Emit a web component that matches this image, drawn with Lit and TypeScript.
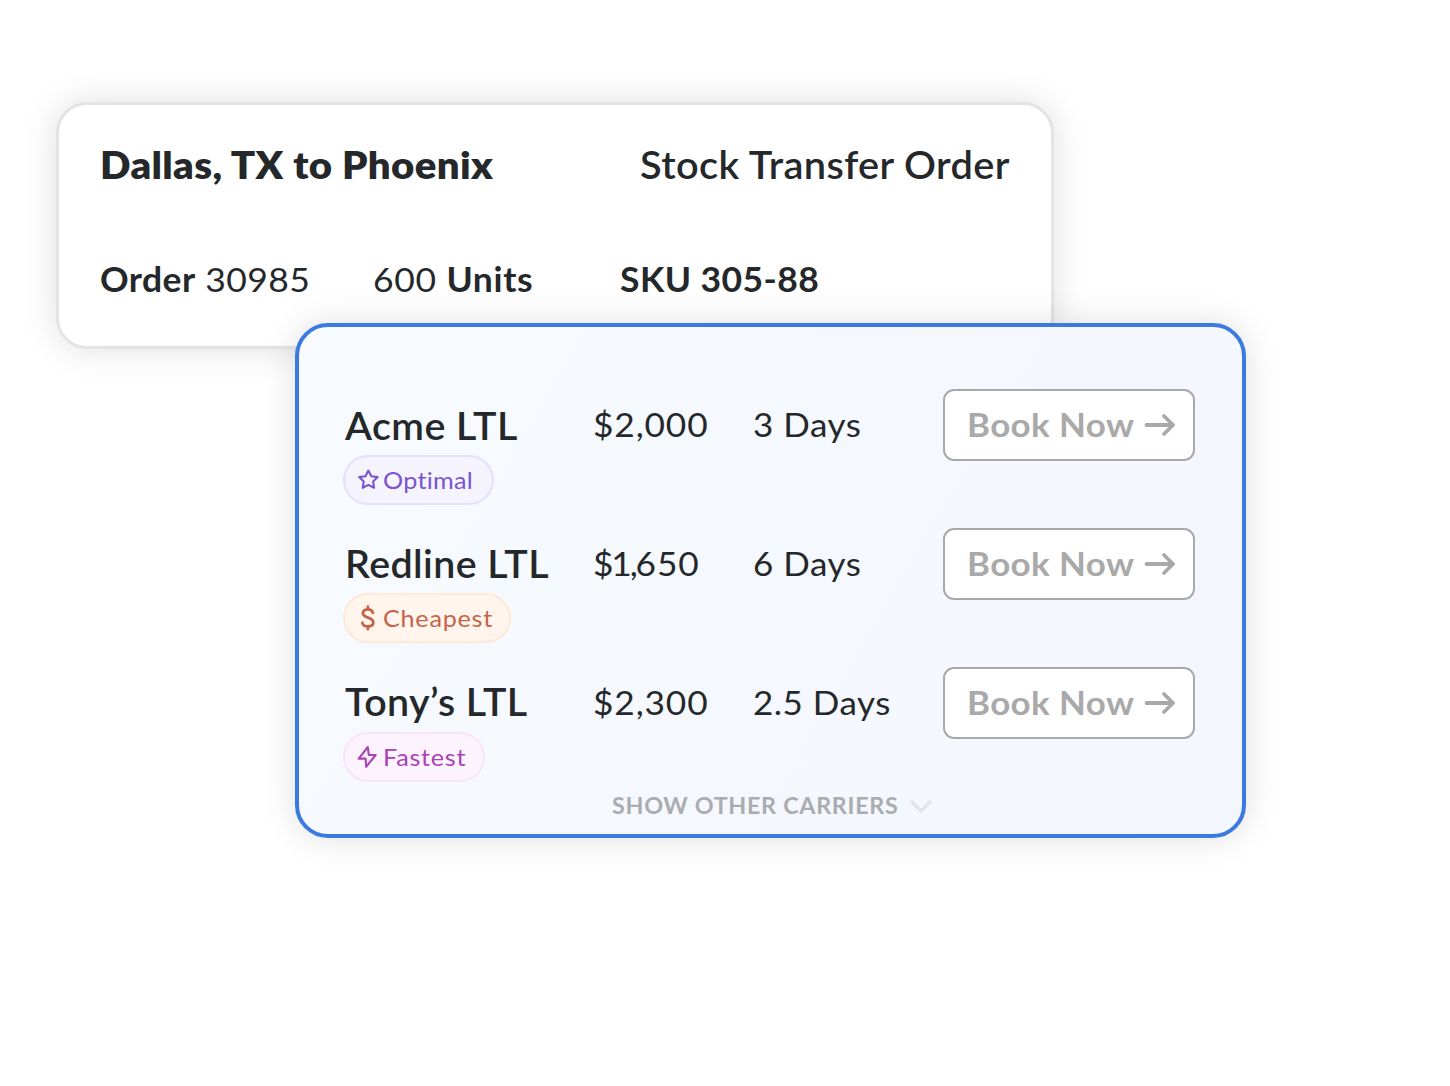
import { LitElement, html, css, svg } from "lit";
import type { TemplateResult } from "lit";
import { customElement, property } from "lit/decorators.js";

type Kind = "optimal" | "cheapest" | "fastest";

interface Quote {
  name: string;
  price: TemplateResult;
  time: string;
  kind: Kind;
  label: string;
}

const icons: Record<Kind, TemplateResult> = {
  optimal: svg`<path stroke-width="2.1" d="M11.4 4.6L14.3 10.2L20.6 11.1L16.1 15.6L17.1 21.8L11.4 18.9L5.7 21.8L6.7 15.6L2.2 11.1L8.5 10.2Z"/>`,
  cheapest: svg`<path stroke-width="2.8" d="M15.9 8.8C15.1 6.2 13.2 5.4 10.9 5.4C7.9 5.4 5.9 6.9 5.9 9.2C5.9 14.6 16.3 12.6 16.3 18.3C16.3 20.9 14 22.4 10.9 22.4C8.1 22.4 6 21.3 5.3 18.8M10.9 2.6V5M10.9 22.8V25.2"/>`,
  fastest: svg`<path stroke-width="2.1" d="M10.8 4L1.8 15.6H8.6L9.2 23.8L18.7 12H11.8Z"/>`,
};

const quotes: Quote[] = [
  { name: "Acme LTL", price: html`$2,000`, time: "3 Days", kind: "optimal", label: "Optimal" },
  { name: "Redline LTL", price: html`<span class="tight">$1,</span>650`, time: "6 Days", kind: "cheapest", label: "Cheapest" },
  { name: "Tony’s LTL", price: html`$2,300`, time: "2.5 Days", kind: "fastest", label: "Fastest" },
];

@customElement("carrier-tag")
export class CarrierTag extends LitElement {
  @property() kind: Kind = "optimal";
  @property() label = "";

  static styles = css`
    :host { display: block; }
    .tag {
      box-sizing: border-box;
      display: flex;
      align-items: center;
      height: 50px;
      padding: 0 0 1px 12px;
      border: 2px solid;
      border-radius: 25px;
      font-size: 24px;
      letter-spacing: 0.7px;
      font-variant-ligatures: none;
    }
    .label { transform: scaleX(1.05); transform-origin: left; }
    .icon { display: block; flex: none; width: 22px; height: 28px; margin-right: 4px; fill: none; stroke: currentColor; stroke-linejoin: round; stroke-linecap: round; }
    .optimal { width: 151px; color: #7a55cf; background: #f5f3fe; border-color: #e6e0fb; letter-spacing: 0.25px; }
    .cheapest { width: 168px; color: #c4644a; background: #fff5ed; border-color: #fee8d6; }
    .fastest { width: 142px; color: #aa43b5; background: #fcf3fe; border-color: #f9e4fc; }
  `;

  render() {
    return html`<div class="tag ${this.kind}">
      <svg class="icon" viewBox="0 0 22 28">${icons[this.kind]}</svg><span class="label">${this.label}</span>
    </div>`;
  }
}

@customElement("app-root")
export class AppRoot extends LitElement {
  static styles = css`
    :host {
      display: flow-root;
      box-sizing: border-box;
      width: 1450px;
      height: 1086px;
      overflow: hidden;
      background: #fff;
      color: #25282a;
      font-family: Lato, "Open Sans", sans-serif;
      white-space: nowrap;
    }
    .order {
      box-sizing: border-box;
      width: 998px;
      height: 247px;
      margin: 102px 0 0 56px;
      padding: 35.5px 41.5px 0 40.5px;
      border: 3px solid #e4e4e4;
      border-radius: 31px;
      background: #fff;
      box-shadow: 0 0 34px rgba(0, 0, 0, 0.13);
    }
    .head { display: flex; justify-content: space-between; font-size: 37.5px; line-height: 48px; }
    .route { font-weight: 800; letter-spacing: 0.32px; transform: scaleX(1.07); transform-origin: left; }
    .type { font-weight: 600; letter-spacing: 0.36px; transform: scaleX(1.06); transform-origin: right; }
    .facts {
      display: grid;
      grid-template-columns: 273px 247px auto;
      justify-items: start;
      margin-top: 70px;
      font-size: 33.5px;
      line-height: 40px;
      letter-spacing: 0.4px;
    }
    .fact { transform: scaleX(1.06); transform-origin: left; }
    .fact:nth-child(2) { letter-spacing: 0.6px; }
    b { font-weight: 700; }
    .quotes {
      position: relative;
      box-sizing: border-box;
      width: 951px;
      height: 515px;
      margin: -26px 0 0 295px;
      padding: 62px 0 0 44px;
      border: 4px solid #3b7ae0;
      border-radius: 33px;
      background: linear-gradient(120deg, #f7fbff, #f3f6fd);
      box-shadow: 0 0 34px rgba(0, 0, 0, 0.13);
    }
    .list { display: flex; flex-direction: column; gap: 23px; }
    .quote {
      display: grid;
      grid-template-columns: 250px 159.5px 190px 252px;
      align-items: start;
      justify-items: start;
      height: 116px;
    }
    .carrier { display: flex; flex-direction: column; align-items: flex-start; gap: 4px; margin-top: 11px; }
    .quote:nth-child(n + 2) .carrier { margin-top: 10px; }
    .quote:nth-child(3) .carrier { margin-top: 9px; gap: 5px; }
    .name {
      padding-left: 2px;
      font-size: 37.5px;
      font-weight: 600;
      line-height: 51px;
      letter-spacing: 0.38px;
      transform: scaleX(1.05);
      transform-origin: left;
    }
    .cell { font-size: 33.3px; line-height: 71px; letter-spacing: 0.5px; transform: scaleX(1.05); transform-origin: left; }
    .price { letter-spacing: 0.8px; transform: scaleX(1.06); }
    .tight { letter-spacing: -2px; }
    .book {
      box-sizing: border-box;
      display: flex;
      align-items: center;
      justify-content: space-between;
      width: 252px;
      height: 72px;
      margin: 0;
      padding: 0 16.5px 0 22.5px;
      border: 2px solid #a9a9ab;
      border-radius: 11px;
      background: #fff;
      color: #a9a9a9;
      font: 700 33.3px/40px Lato, sans-serif;
      letter-spacing: 0.35px;
    }
    .action { transform: scaleX(1.05); transform-origin: left; padding-bottom: 2px; }
    .arrow { display: block; width: 32px; height: 26px; fill: none; stroke: currentColor; stroke-width: 3.8; stroke-linecap: round; stroke-linejoin: round; }
    .more {
      display: flex;
      align-items: center;
      gap: 27px;
      margin: 7.5px 0 0 268.5px;
      color: #a9acb0;
      font-size: 22px;
      font-weight: 700;
      line-height: 30px;
      letter-spacing: 0.65px;
    }
    .more-label { transform: scaleX(1.06); transform-origin: left; }
    .chevron { display: block; width: 24px; height: 18px; fill: none; stroke: #e2e5e7; stroke-width: 3.4; }
  `;

  render() {
    return html`
      <section class="order">
        <div class="head">
          <span class="route">Dallas, TX to Phoenix</span>
          <span class="type">Stock Transfer Order</span>
        </div>
        <div class="facts">
          <span class="fact"><b>Order</b> 30985</span>
          <span class="fact">600 <b>Units</b></span>
          <span class="fact"><b>SKU 305-88</b></span>
        </div>
      </section>
      <section class="quotes">
        <div class="list">
          ${quotes.map((q) => html`
            <div class="quote">
              <div class="carrier">
                <span class="name">${q.name}</span>
                <carrier-tag .kind=${q.kind} .label=${q.label}></carrier-tag>
              </div>
              <span class="cell price">${q.price}</span>
              <span class="cell">${q.time}</span>
              <button class="book">
                <span class="action">Book Now</span>
                <svg class="arrow" viewBox="0 0 32 26"><path d="M2.5 13H29M20 4L29 13L20 22"/></svg>
              </button>
            </div>`)}
        </div>
        <div class="more">
          <span class="more-label">SHOW OTHER CARRIERS</span>
          <svg class="chevron" viewBox="0 0 24 18"><path d="M2 4L12 14L22 4"/></svg>
        </div>
      </section>
    `;
  }
}
